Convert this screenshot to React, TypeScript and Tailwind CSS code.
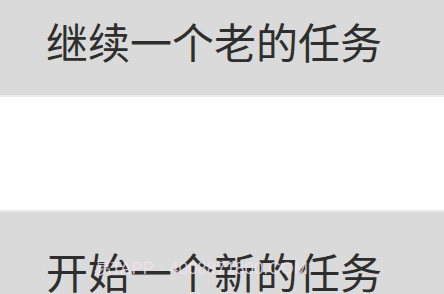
export default function App() {
  return (
    <div className="relative h-[294px] w-[444px] overflow-hidden bg-white font-['Noto_Sans_CJK_SC',sans-serif]">
      <div className="h-[97px] border-b-2 border-[#ececec] bg-[#d9dad9] pl-[46px] pt-[20px]">
        <span className="block text-[42px] leading-[42px] text-[#2e2e2e]">继续一个老的任务</span>
      </div>
      <div className="h-[113px]" />
      <div className="h-[84px] border-t-2 border-[#ececec] bg-[#d9dad9] pl-[46px] pt-[38px]">
        <span className="block text-[42px] leading-[42px] text-[#2e2e2e]">开始一个新的任务</span>
      </div>
      <div className="absolute left-[94px] top-[259px] font-['Liberation_Sans',sans-serif] text-[17px] leading-[20px] text-[#f2e4ee]/80">
        易TAPP · 4008871800.COM
      </div>
    </div>
  );
}
